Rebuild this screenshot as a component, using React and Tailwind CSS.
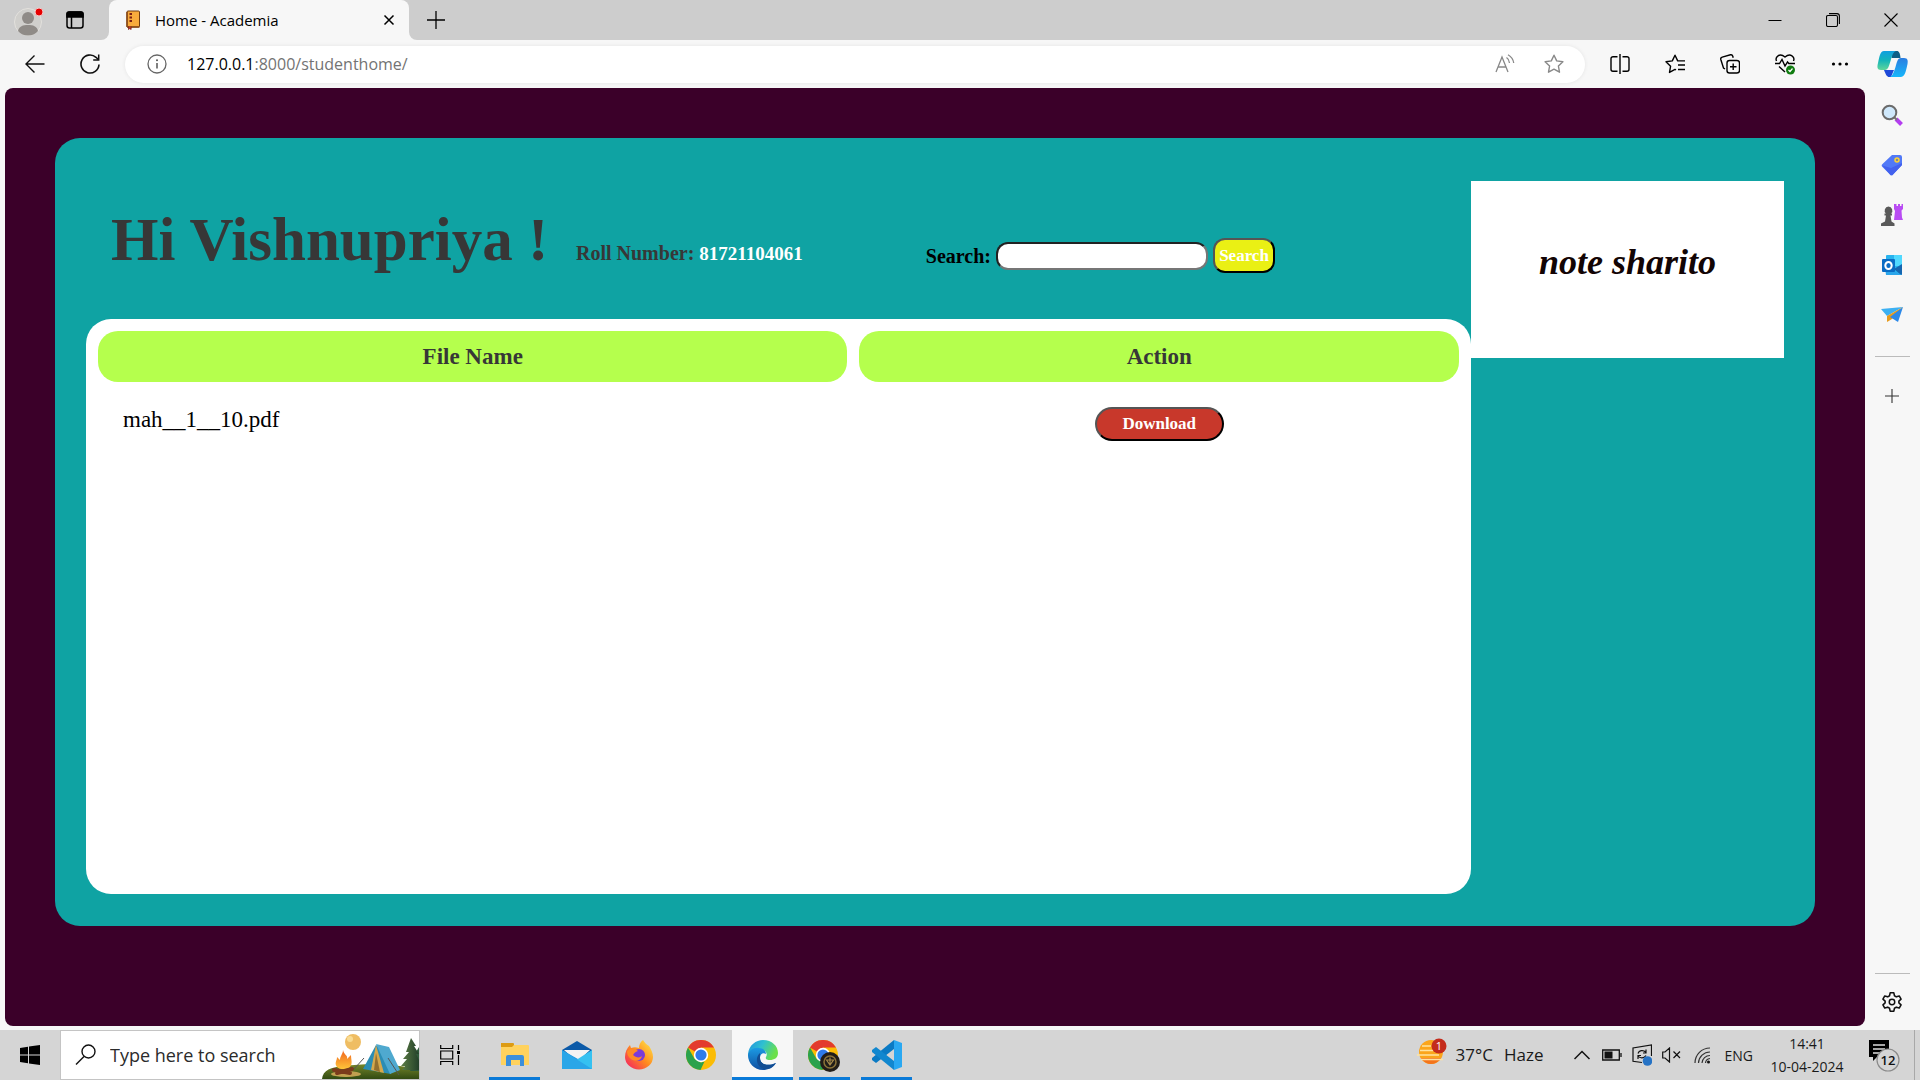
import React from "react";

const ui = "font-['Open_Sans','Noto_Sans',sans-serif]";
const serif = "font-['Liberation_Serif',serif]";

function Svg({ w, h, vb, children }) {
  return (
    <svg width={w} height={h || w} viewBox={vb || `0 0 ${w} ${h || w}`} fill="none" stroke="currentColor" strokeWidth="1.5" className="block shrink-0" aria-hidden="true">
      {children}
    </svg>
  );
}

function TabBar() {
  return (
    <header className="flex h-10 items-stretch bg-[#f7f7f7]">
      <div className="flex w-[109px] shrink-0 items-center rounded-br-lg bg-[#cdcdcd] pl-3">
        <button aria-label="Profile" className="w-8">
          <Svg w={32} h={36}>
            <circle cx="16" cy="20" r="13.5" fill="#d0cfcc" stroke="#e3e1dd" strokeWidth="1" />
            <circle cx="16" cy="16" r="6" fill="#8f8b87" stroke="none" />
            <path d="M6 29c1-5 5-6 10-6s9 1 10 6c-2.500 3-6 4.500-10 4.500S8.500 32 6 29Z" fill="#8f8b87" stroke="none" />
            <circle cx="27" cy="10" r="4" fill="#e60000" stroke="#f3c9c9" strokeWidth="1" />
          </Svg>
        </button>
        <button aria-label="Tab actions" className="ml-[22px]">
          <Svg w={18}>
            <rect x="1" y="1" width="16" height="16" rx="2.500" stroke="#000" />
            <path d="M1 3a2 2 0 0 1 2-2h12a2 2 0 0 1 2 2v3H1Z" fill="#000" />
            <path d="M5.500 6v11" stroke="#000" />
          </Svg>
        </button>
      </div>
      <div className="flex w-[300px] shrink-0 bg-[#cdcdcd]">
        <div className="flex flex-1 items-center rounded-t-lg bg-[#f7f7f7] pl-4 pr-[10px]">
          <Svg w={16} h={20}>
            <rect x="2" y="1" width="12.500" height="16" rx="1" fill="#f9ab3c" stroke="#6e3b12" strokeWidth="1" />
            <path d="M2 17V2M14.500 17H2" stroke="#8a4a17" />
            <path d="M4.500 4h2.500M4.500 7.500h2.500M4.500 11h2.500" stroke="#7b1f14" strokeWidth="2" />
            <path d="M3.500 16.500v3l1.300-1 1.300 1v-3" fill="#c0392b" stroke="#7b1f14" strokeWidth=".8" />
          </Svg>
          <span className="ml-[14px] flex-1 pb-px text-[15px] leading-5 text-black">Home - Academia</span>
          <button aria-label="Close tab" className="p-1">
            <Svg w={12}><path d="M1.500 1.500l9 9M10.500 1.500l-9 9" stroke="#000" /></Svg>
          </button>
        </div>
      </div>
      <div className="flex flex-1 items-center rounded-bl-lg bg-[#cdcdcd]">
        <button aria-label="New tab" className="ml-[18px]">
          <Svg w={18}><path d="M9 0v18M0 9h18" stroke="#000" strokeWidth="1.300" /></Svg>
        </button>
        <div className="ml-auto flex items-center">
          <button aria-label="Minimize" className="flex w-[58px] justify-center"><Svg w={14}><path d="M.500 7.500h13" stroke="#000" strokeWidth="1" /></Svg></button>
          <button aria-label="Restore" className="flex w-[58px] justify-center">
            <Svg w={14}><rect x=".5" y="2.500" width="11" height="11" rx="1.500" stroke="#000" strokeWidth="1.100" /><path d="M3 .6h8a2.500 2.500 0 0 1 2.400 2.400v8" stroke="#000" strokeWidth="1.100" /></Svg>
          </button>
          <button aria-label="Close window" className="flex w-[58px] justify-center"><Svg w={14}><path d="M.5.500l13 13M13.500.500l-13 13" stroke="#000" strokeWidth="1.100" /></Svg></button>
        </div>
      </div>
    </header>
  );
}

const star = "M10 1.200l2.700 5.700 6.200.8-4.500 4.300 1.100 6.200L10 15.200l-5.500 3 1.100-6.200L1.100 7.700l6.200-.8Z";

function Toolbar() {
  return (
    <div className="flex h-12 items-center bg-[#f7f7f7] pl-[25px]">
      <button aria-label="Back"><Svg w={20}><path d="M19.500 10H1M9.500 1.500L1 10l8.500 8.500" stroke="#111" strokeWidth="1.400" /></Svg></button>
      <button aria-label="Refresh" className="ml-[35px]">
        <Svg w={20}><path d="M19 10.500a9 9 0 1 1-3-7.200l2.500 2.500" stroke="#111" strokeWidth="1.600" /><path d="M18.700.500v5.500h-5.500" stroke="#111" strokeWidth="1.500" /></Svg>
      </button>
      <div className="ml-[25px] flex h-[37px] flex-1 items-center rounded-full bg-white pl-[22px] pr-[21px] shadow-[0_0_4px_rgba(0,0,0,0.08)]">
        <button aria-label="Site information">
          <Svg w={20}><circle cx="10" cy="10" r="9" stroke="#666" strokeWidth="1.300" /><path d="M10 9v5.500" stroke="#555" /><circle cx="10" cy="6.300" r="1" fill="#555" stroke="none" /></Svg>
        </button>
        <div className="ml-5 flex-1 text-[16px] text-[#737373]"><span className="text-black">127.0.0.1</span>:8000/studenthome/</div>
        <button aria-label="Read aloud">
          <Svg w={20}><path d="M1 18L7 3l6 15M3 13h8" stroke="#888" strokeWidth="1.300" /><path d="M11.500 3.500c2 1.300 2.800 3 3 5.500M13 .800c3.500 2 5.200 4.500 5.700 8.200" stroke="#888" strokeWidth="1.300" /></Svg>
        </button>
        <button aria-label="Add to favorites" className="ml-[29px]"><Svg w={20}><path d={star} stroke="#888" strokeWidth="1.400" strokeLinejoin="round" /></Svg></button>
      </div>
      <div className="ml-[25px] flex items-center gap-[35px]">
        <button aria-label="Split screen"><Svg w={20}><path d="M7.500 2.700H3a2 2 0 0 0-2 2v10.600a2 2 0 0 0 2 2h4.500M12.500 2.700H17a2 2 0 0 1 2 2v10.600a2 2 0 0 1-2 2h-4.500M10 0v20" stroke="#000" strokeWidth="1.400" /></Svg></button>
        <button aria-label="Favorites"><Svg w={20}><path d="M11 16l-1-.600-5.500 3 1.100-6.200L1 7.700l6.300-.8L10 1.200l2.700 5.700H20M13 11h7M13 15.500h7" stroke="#000" strokeWidth="1.400" strokeLinejoin="round" /></Svg></button>
        <button aria-label="Collections"><Svg w={20}><rect x="7" y="6.500" width="12.500" height="12.500" rx="2.500" stroke="#000" strokeWidth="1.400" /><path d="M13.200 9.500v6.500M10 12.700h6.500M5 15L3.500 14 .800 5.500a2 2 0 0 1 1.400-2.400L10.500.800a2 2 0 0 1 2.300 1.400l.4 1.500" stroke="#000" strokeWidth="1.400" /></Svg></button>
        <button aria-label="Browser essentials"><Svg w={20} h={22}><path d="M1.500 8C-.200 4 4.500-.500 10 4c5.500-4.500 10.200 0 8.500 4M0 10.500h4.500l2.500-4 3 6.500 2.500-4 1.300 1.500H20M4 13.500l6 5.500" stroke="#000" strokeWidth="1.400" /><circle cx="15.500" cy="17" r="4.500" fill="#107c10" stroke="none" /><path d="M13.500 17l1.500 1.500 2.500-3" stroke="#fff" strokeWidth="1.200" /></Svg></button>
        <button aria-label="Settings and more"><Svg w={20}><g fill="#000" stroke="none"><circle cx="3.500" cy="10" r="1.600" /><circle cx="10" cy="10" r="1.600" /><circle cx="16.500" cy="10" r="1.600" /></g></Svg></button>
      </div>
      <button aria-label="Copilot" className="ml-[27px] mr-[11px]">
        <Svg w={32} h={28}>
          <defs>
            <linearGradient id="cpA" x1="0" y1="0" x2="0" y2="1"><stop stopColor="#0f9fe0" /><stop offset=".5" stopColor="#14b5b9" /><stop offset="1" stopColor="#5fd69a" /></linearGradient>
            <linearGradient id="cpB" x1="0" y1="0" x2="0" y2="1"><stop stopColor="#2b7de0" /><stop offset="1" stopColor="#16b7fb" /></linearGradient>
          </defs>
          <path d="M15 1h5c2 0 3 2 3.500 7h-9Z" fill="#0c5f87" stroke="none" />
          <path d="M7 20h10l-3 7h-2c-2 0-3-2-5-7Z" fill="#1e49d8" stroke="none" />
          <path d="M7 1h12c-3 1-4 5-5.500 10S11 20 8 20H4c-4 0-4-3-3-7C2.500 7 3 1 7 1Z" fill="url(#cpA)" stroke="none" />
          <path d="M24 8h3c4 0 4 3 3.500 6-1 4-2 13-6.500 13H13c2.500-1 4-5 5.500-10S20.500 8 24 8Z" fill="url(#cpB)" stroke="none" />
        </Svg>
      </button>
    </div>
  );
}

function Sidebar() {
  return (
    <aside className="flex w-[55px] shrink-0 flex-col items-center bg-[#f7f7f7] pr-px pt-4">
      <div className="flex flex-col gap-[28px]">
        <button aria-label="Search sidebar"><Svg w={22}><path d="M15 15l5.500 5.500" stroke="#b43df0" strokeWidth="4" /><path d="M13 13l3 3" stroke="#777" strokeWidth="2" /><circle cx="8.500" cy="8.500" r="6.800" fill="#cfe8fb" stroke="#6b6b6b" strokeWidth="2" /></Svg></button>
        <button aria-label="Shopping"><Svg w={22}><path d="M11 1h8a2 2 0 0 1 2 2v8L12 20.500a2 2 0 0 1-3 0L1.500 13a2 2 0 0 1 0-3Z" fill="#5179f7" stroke="none" /><path d="M1.200 11.500L9 20.500a2 2 0 0 0 3 0L21 11v-2L10 14Z" fill="#4361ee" stroke="none" /><circle cx="16" cy="6" r="2" fill="#7f8a9a" stroke="#ffd335" strokeWidth="1.500" /></Svg></button>
        <button aria-label="Games"><Svg w={22}><path d="M13 0h2.500v2H17V0h2v2h1.500V0H22v5l-1.500 1.500.5 7L22 16h-9l1-9-1-2Z" fill="#b94cf3" stroke="none" /><path d="M7.500 2.500a4 4 0 0 1 2.500 7h1v2H9.500l1 6 3 2v2.500H0v-2.500l4-2 1-6H3.500v-2H5a4 4 0 0 1 2.500-7Z" fill="#595959" stroke="none" /></Svg></button>
        <button aria-label="Outlook"><Svg w={22}><rect x="5" y="1" width="16" height="20" rx="1" fill="#28b3ee" stroke="none" /><path d="M13 1h7a1 1 0 0 1 1 1v10h-8Z" fill="#50d9ff" stroke="none" /><path d="M13 15l8-5v10a1 1 0 0 1-1 1Z" fill="#1566b0" stroke="none" /><path d="M4 13l17 8H5Z" fill="#2aa5ea" stroke="none" /><rect x="1" y="5" width="13" height="13" rx="1" fill="#0a6cc4" stroke="none" /><ellipse cx="7.500" cy="11.500" rx="3.200" ry="3.500" stroke="#fff" strokeWidth="2" /></Svg></button>
        <button aria-label="Drop"><Svg w={22}><path d="M0 5l22-2L6 12Z" fill="#3cb0f2" stroke="none" /><path d="M22 3L6 12v6l5-3Z" fill="#e79b1c" stroke="none" /><path d="M22 3L9 13l8 5Z" fill="#2b88e8" stroke="none" /></Svg></button>
      </div>
      <div className="mt-[30px] w-[35px] border-t border-[#bbb]" />
      <button aria-label="Customize sidebar" className="mt-8"><Svg w={14}><path d="M7 0v14M0 7h14" stroke="#333" strokeWidth="1.100" /></Svg></button>
      <div className="mt-auto w-[35px] border-t border-[#bbb]" />
      <button aria-label="Sidebar settings" className="mb-[13px] mt-[17px]">
        <Svg w={22} vb="0 0 24 24"><path d="M10 2h4l.7 3.200 2 1.200 3.200-1 2 3.500-2.400 2.200v1.800l2.400 2.200-2 3.500-3.200-1-2 1.200L14 22h-4l-.7-3.200-2-1.200-3.200 1-2-3.500 2.400-2.200v-1.800L2.100 8.900l2-3.500 3.200 1 2-1.200Z" stroke="#111" strokeWidth="1.700" strokeLinejoin="round" /><circle cx="12" cy="12" r="3" stroke="#111" strokeWidth="1.600" /></Svg>
      </button>
    </aside>
  );
}

function StudentHome() {
  return (
    <main className={`flex flex-1 flex-col rounded-lg bg-[#3b0029] px-[50px] pb-[100px] pt-[50px] ${serif}`}>
      <div className="flex flex-1 rounded-[25px] bg-[#0fa3a3] px-[31px] pb-8">
        <div className="flex min-w-0 flex-1 flex-col">
          <div className="flex h-[181px] items-baseline pl-[25px] pt-14 font-bold">
            <h1 className="w-[440px] whitespace-nowrap text-[61px] text-[#373737]">Hi Vishnupriya !</h1>
            <p className="ml-[25px] whitespace-nowrap text-[20px] text-[#373737]">
              Roll Number: <span className="text-[19px] text-white">81721104061</span>
            </p>
            <form className="ml-auto mr-[196px] mt-11 flex items-center self-start" onSubmit={(e) => e.preventDefault()}>
              <label htmlFor="q" className="text-[20px] leading-6 text-black">Search:</label>
              <input id="q" type="text" className="ml-[5px] h-[28px] w-[212px] rounded-[12px] border-2 border-b-[#767676] border-l-[#222] border-r-[#767676] border-t-[#222] bg-white px-2 text-base font-normal" />
              <button className="ml-[5px] h-[35px] w-[62px] rounded-[12px] border-2 border-b-black border-l-[#555] border-r-black border-t-[#555] bg-[#eaf014] text-[17px] text-white">Search</button>
            </form>
          </div>
          <div className="flex-1 rounded-[25px] bg-white">
            <table className="w-full border-separate border-spacing-[12px]">
              <thead>
                <tr className="text-[23px] leading-8 text-[#373737]">
                  <th className="h-[51px] w-5/9 rounded-[20px] bg-[#b5ff4d] p-0">File Name</th>
                  <th className="h-[51px] rounded-[20px] bg-[#b5ff4d] p-0">Action</th>
                </tr>
              </thead>
              <tbody>
                <tr>
                  <td className="px-[25px] pt-[10px] align-top text-[23px] leading-8 text-black">mah__1__10.pdf</td>
                  <td className="pt-[13px] text-center align-top">
                    <button className="h-[34px] w-[129px] rounded-[20px] border-2 border-b-black border-l-[#555] border-r-black border-t-[#555] bg-[#c8382b] text-[17px] font-bold text-white">Download</button>
                  </td>
                </tr>
              </tbody>
            </table>
          </div>
        </div>
        <div className="mt-[43px] flex h-[177px] w-[313px] shrink-0 items-center justify-center bg-white pb-4 text-[36px] font-bold italic text-[#120404]">note sharito</div>
      </div>
    </main>
  );
}

function ChromeMark() {
  return (
    <>
      <circle cx="15" cy="15" r="15" fill="#fbbc05" stroke="none" />
      <path d="M15 15L2 7.500A15 15 0 0 1 28 7.500H15Z" fill="#e33b2e" stroke="none" />
      <path d="M2 7.500L8.500 18.700 15 22.500l3.500-1L14.500 30A15 15 0 0 1 2 7.500Z" fill="#2ba24c" stroke="none" />
      <circle cx="15" cy="15" r="7.200" fill="#fff" stroke="none" />
      <circle cx="15" cy="15" r="5.600" fill="#2f7bea" stroke="none" />
    </>
  );
}

function TaskbarApp({ label, open, active, children }) {
  const box = active ? "w-[61px] bg-[#f7f7f7]" : "w-[51px]";
  return (
    <button aria-label={label} className={`flex shrink-0 flex-col items-center border-b-[3px] pt-[10px] ${box} ${open ? "border-[#0a7ad8]" : "border-transparent"}`}>
      {children}
    </button>
  );
}

function Taskbar() {
  return (
    <footer className="flex h-[50px] items-stretch bg-[#d5d5d5]">
      <button aria-label="Start" className="flex w-[60px] shrink-0 items-center justify-center">
        <Svg w={20}><path d="M0 3l8-1.200V9.500H0ZM9 1.600L20 0v9.500H9ZM0 10.500h8v7.700L0 17ZM9 10.500h11V20L9 18.400Z" fill="#000" stroke="none" /></Svg>
      </button>
      <label className="flex w-[360px] shrink-0 items-center border border-[#c4c4c4] bg-white pl-[14px]">
        <Svg w={22}><circle cx="13.500" cy="7.500" r="6.500" stroke="#111" strokeWidth="1.400" /><path d="M9 12.500L1 20.500" stroke="#111" /></Svg>
        <input type="text" placeholder="Type here to search" aria-label="Type here to search" className="ml-[13px] min-w-0 flex-1 bg-transparent text-[18px] outline-none placeholder:text-[#2b2b2b]" />
        <Svg w={97} h={48}>
          <defs>
            <linearGradient id="hill" x1="0" y1="0" x2="0" y2="1"><stop stopColor="#76862a" /><stop offset="1" stopColor="#314a12" /></linearGradient>
            <linearGradient id="fire" x1="0" y1="0" x2="0" y2="1"><stop stopColor="#f0621d" /><stop offset="1" stopColor="#ffc63a" /></linearGradient>
            <linearGradient id="tree" x1="0" y1="0" x2="1" y2="0"><stop stopColor="#5c7d45" /><stop offset="1" stopColor="#23402a" /></linearGradient>
          </defs>
          <circle cx="31" cy="11" r="8" fill="#efbd63" stroke="none" />
          <circle cx="28" cy="8" r="3" fill="#f9db92" stroke="none" />
          <path d="M0 48c1-9 9-12 22-13 25-3 50-2 75 3v10Z" fill="url(#hill)" stroke="none" />
          <ellipse cx="24" cy="43" rx="15" ry="3" fill="#c1a050" stroke="none" />
          <path d="M97 16l-6 10h2l-4 7h3l-4 7h9Z" fill="#2f5a3a" stroke="none" />
          <path d="M89 7l5 8h-2l5 8h-3l3 6v10H80c1-1 3-3 3-4h-4l6-7h-4l6-7h-3Z" fill="url(#tree)" stroke="none" />
          <path d="M54 14L41 38l28 5-3-20Z" fill="#2b8db4" stroke="none" />
          <path d="M54 13l13 3 11 23-10 4Z" fill="#4fa9cf" stroke="none" />
          <path d="M54 14l-5 25 13 3Z" fill="#d5a84c" stroke="none" />
          <path d="M54 22l-2 17 6 2Z" fill="#94702f" stroke="none" />
          <path d="M42 27l-10 11M66 27l11 17" stroke="#555" strokeWidth="1" />
          <path d="M21 19c1 5 5 5 4 9l4-4c0 5 2 8-1 12-3 3-10 3-13 0-3-4 0-6 0-10l3 3c0-4 3-6 3-10Z" fill="url(#fire)" stroke="none" />
          <path d="M12 39l16 3M30 38l-15 4" stroke="#7a3b1c" strokeWidth="4" strokeLinecap="round" />
        </Svg>
      </label>
      <button aria-label="Task view" className="flex w-[60px] shrink-0 items-center justify-center">
        <Svg w={20}><path d="M.700 0v3.500h12V0M.700 20v-3.500h12V20M.700 6h12v8h-12ZM18.500 0v5M18.500 10v10" stroke="#000" strokeWidth="1.200" /><rect x="17" y="6" width="3" height="3" fill="#000" stroke="none" /></Svg>
      </button>
      <div className="ml-[9px] flex shrink-0 gap-[11px]">
        <TaskbarApp label="File Explorer" open>
          <Svg w={28} h={30}><path d="M0 3h12a1 1 0 0 1 1 1v3H0Z" fill="#dd9b13" stroke="none" /><path d="M0 7h11l2-2h14a1 1 0 0 1 1 1v19H0Z" fill="#ffd25e" stroke="none" /><path d="M5 26V17a2 2 0 0 1 2-2h14a2 2 0 0 1 2 2v9h-4v-6h-9v6Z" fill="#3c8fdb" stroke="none" /></Svg>
        </TaskbarApp>
        <TaskbarApp label="Mail"><Svg w={30}><path d="M0 10L15 1l15 9v8H0Z" fill="#0c5aa8" stroke="none" /><path d="M2 10h26L15 22Z" fill="#f3f3f3" stroke="none" /><path d="M0 10l30 17v2H0Z" fill="#1c97e0" stroke="none" /><path d="M30 10L0 29h30Z" fill="#35c1f1" stroke="none" /><path d="M0 10l30 19H0Z" fill="#2aa6e8" stroke="none" /></Svg></TaskbarApp>
        <TaskbarApp label="Firefox">
          <Svg w={28} h={30}>
            <defs><linearGradient id="ff" x1="1" y1="0" x2="0" y2="1"><stop stopColor="#fff04a" /><stop offset=".5" stopColor="#ff8a1f" /><stop offset="1" stopColor="#f3166b" /></linearGradient></defs>
            <path d="M18 0c2 3 3 4 6 6 2 3 4 7 4 11a14 12.500 0 0 1-28 0C0 12 2 8 5 5l1 3c3-1 5-1 8 0 0-3 1-6 4-8Z" fill="url(#ff)" stroke="none" />
            <circle cx="14" cy="15" r="6" fill="#7a3ad8" stroke="none" />
            <path d="M2 11c4-3 8-3 11 0-3 1-4 2-5 4 3 3 7 3 9 1-1 5-7 6-11 3-3-2-4-5-4-8Z" fill="#ff8a24" stroke="none" />
          </Svg>
        </TaskbarApp>
        <TaskbarApp label="Chrome"><Svg w={30}><ChromeMark /></Svg></TaskbarApp>
      </div>
      <div className="ml-[6px] flex shrink-0">
        <TaskbarApp label="Edge" open active>
          <Svg w={30}>
            <defs>
              <linearGradient id="eg" x1="0" y1="0" x2="1" y2=".4"><stop stopColor="#1f8fe0" /><stop offset=".5" stopColor="#2fc0d0" /><stop offset="1" stopColor="#6be04a" /></linearGradient>
              <linearGradient id="eb" x1="0" y1="0" x2="0" y2="1"><stop stopColor="#1c9be4" /><stop offset="1" stopColor="#0f4fa0" /></linearGradient>
            </defs>
            <path d="M0 14C1 5 8 0 15 0c9 0 15 6 15 13 0 5-4 7-8 7-3 0-5-1-4-3 2-3 0-7-5-7C6 10 1 13 0 18Z" fill="url(#eg)" stroke="none" />
            <path d="M0 15c1-5 6-8 11-7 4 0 7 3 7 6-3-2-6 0-6 4 0 6 7 9 16 5-3 5-8 7-13 7C6 30 0 23 0 15Z" fill="url(#eb)" stroke="none" />
            <path d="M12 13c-6 5-3 16 6 16 4 0 8-3 10-6-9 4-16 1-16-5Z" fill="#124d93" stroke="none" />
          </Svg>
        </TaskbarApp>
      </div>
      <div className="ml-[6px] flex shrink-0 gap-[11px]">
        <TaskbarApp label="Chrome profile" open><Svg w={33} h={32}><ChromeMark /><circle cx="22" cy="22" r="10" fill="#211d19" stroke="none" /><circle cx="22" cy="22" r="6" stroke="#8b7338" strokeWidth="1.500" /><path d="M18.500 20l3.500 5 3.500-5ZM22 17.500v7" stroke="#a68a4b" strokeWidth="1.200" /></Svg></TaskbarApp>
        <TaskbarApp label="Visual Studio Code" open>
          <Svg w={30}><path d="M22 0v9L4 23 0 20v-2Z" fill="#0a7ac4" stroke="none" /><path d="M22 30v-9L4 7 0 10v2Z" fill="#1187cf" stroke="none" /><path d="M22 0l8 3v24l-8 3Z" fill="#29a8f2" stroke="none" /></Svg>
        </TaskbarApp>
      </div>
      <div className="ml-auto flex items-center text-[#1a1a1a]">
        <button className="flex items-center text-[17px]">
          <Svg w={30} h={36}>
            <path d="M2 15A12 12 0 0 1 26 15a12 12 0 0 1-24 0Z" fill="#fba51b" stroke="none" />
            <path d="M4 21c5 8 15 8 20 0Z" fill="#f4741c" stroke="none" />
            <path d="M5 9h9M3 13.500h13M0 18h22M4 22.500h22" stroke="#ffe3a0" strokeWidth="1.600" />
            <circle cx="22" cy="9" r="7.500" fill="#c42b1c" stroke="none" />
            <text x="22" y="13" textAnchor="middle" fontSize="11" fill="#fff" stroke="none">1</text>
          </Svg>
          <span className="ml-[9px] whitespace-nowrap">37°C</span><span className="ml-[11px]">Haze</span>
        </button>
        <button aria-label="Show hidden icons" className="ml-[30px]"><Svg w={16} h={10}><path d="M.500 9L8 1.500 15.500 9" stroke="#111" /></Svg></button>
        <button aria-label="Battery" className="ml-3"><Svg w={20} h={12}><path d="M.700 1h16.600v10H.700ZM19 4v4" stroke="#111" strokeWidth="1.300" /><rect x="2.500" y="2.500" width="8" height="7" fill="#111" stroke="none" /></Svg></button>
        <button aria-label="Sync" className="ml-[10px]"><Svg w={20} h={22}><path d="M10 18.500l-9-1.200V4L19.500 1v11" stroke="#111" strokeWidth="1.200" /><path d="M6 9.500c1-3 5-4 7.500-1.500M14 5.500V9h-3M14 11.500c-2 3-6 3-8 .5M6 15v-3.500h3" stroke="#111" strokeWidth="1.200" /><circle cx="15.500" cy="17" r="4.800" fill="#2673c5" stroke="none" /></Svg></button>
        <button aria-label="Muted" className="ml-[10px]"><Svg w={19} h={16}><path d="M.700 5v6H3l4.500 4V1L3 5ZM11.500 4.500l6.500 6.500M18 4.500L11.500 11" stroke="#111" strokeWidth="1.200" /></Svg></button>
        <button aria-label="Network" className="ml-[13px]"><Svg w={17}><path d="M1 16A15 15 0 0 1 16 1M4.500 16A11.500 11.500 0 0 1 16 5M8 16a8 8 0 0 1 8-7.500M11.500 16a5 5 0 0 1 4.500-4.500" stroke="#333" strokeWidth="1.200" /><circle cx="14.500" cy="15" r="1.500" fill="#111" stroke="none" /></Svg></button>
        <span className="ml-[14px] text-[14px]">ENG</span>
        <div className="ml-4 flex w-[76px] flex-col items-center whitespace-nowrap text-[14px] leading-[23px]"><span>14:41</span><span>10-04-2024</span></div>
        <button aria-label="Notifications" className="ml-6 mr-[13px]">
          <Svg w={32} h={34}>
            <path d="M0 2h20v17H8l-4 4v-4H0Z" fill="#000" stroke="none" /><path d="M4 7h12M4 11h12M4 15h8" stroke="#ddd" strokeWidth="1.300" />
            <circle cx="19" cy="22" r="11" fill="#d5d5d5" stroke="#8a8a8a" strokeWidth="1.200" />
            <text x="19" y="27" textAnchor="middle" fontSize="13" fontWeight="600" fill="#111" stroke="none">12</text>
          </Svg>
        </button>
        <div className="mr-[5px] h-full border-l border-[#a8a8a8]" />
      </div>
    </footer>
  );
}

export default function App() {
  return (
    <div className={`flex min-h-screen flex-col bg-[#f7f7f7] ${ui}`}>
      <TabBar />
      <Toolbar />
      <div className="flex flex-1 items-stretch pb-1 pl-[5px]">
        <StudentHome />
        <Sidebar />
      </div>
      <Taskbar />
    </div>
  );
}
